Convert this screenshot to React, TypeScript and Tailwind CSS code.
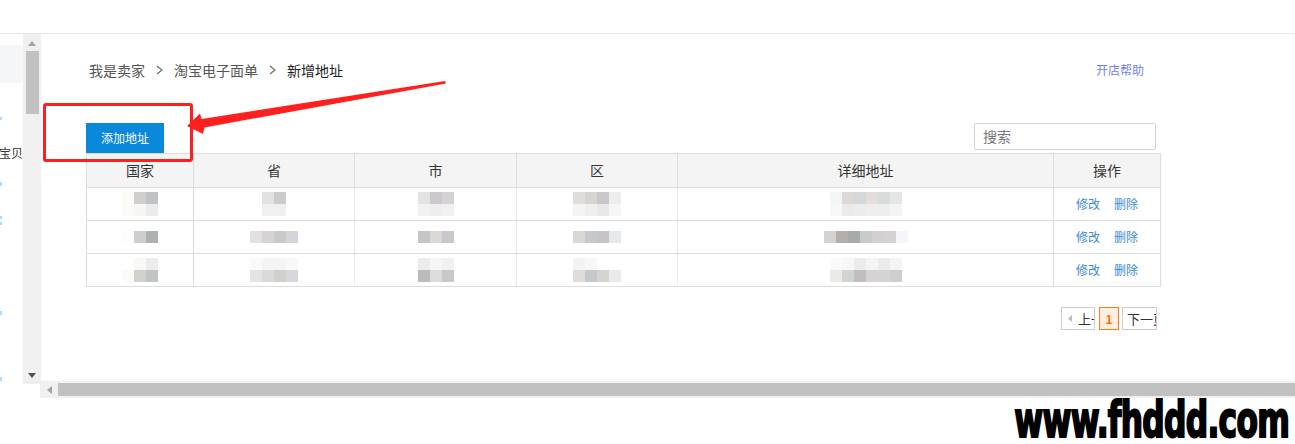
import React from 'react';

type Blur = string[][];

// pixelated (mosaic) placeholders for the hidden address data
const rows: { cells: Blur[] }[] = [
  {
    cells: [
      [["bg-[#fbfaf7]", "bg-[#d0cfcc]", "bg-[#bfc3c5]"], ["bg-[#fbfaf7]", "bg-[#f7f6f4]", "bg-[#ebecee]"]],
      [["bg-[#e2e2e2]", "bg-[#cccccc]"], ["bg-[#f0f0f0]", "bg-[#f0f0f0]"]],
      [["bg-[#e3e3e3]", "bg-[#cbc9cb]", "bg-[#d5d2d6]"], ["bg-[#f1f1f1]", "bg-[#eeeeee]", "bg-[#f2f0f3]"]],
      [["bg-[#dedddc]", "bg-[#d6d4d0]", "bg-[#cbc6c9]", "bg-[#eceeee]"], ["bg-[#f4f4f4]", "bg-[#f0efef]", "bg-[#e9e8e8]", "bg-[#f6f6f6]"]],
      [["bg-[#f4f5f5]", "bg-[#ddd9d7]", "bg-[#d5d8d9]", "bg-[#e2dedc]", "bg-[#d8dcdc]", "bg-[#e6e5e5]"], ["bg-[#f8f8f8]", "bg-[#ebe9e9]", "bg-[#ececec]", "bg-[#eeeeee]", "bg-[#eeeeee]", "bg-[#f4f4f4]"]],
    ],
  },
  {
    cells: [
      [["bg-[#fdfcfa]", "bg-[#cecdcb]", "bg-[#aeb1b2]"]],
      [["bg-[#e1e1e1]", "bg-[#d6d2d6]", "bg-[#c9cac5]", "bg-[#d5d4da]"]],
      [["bg-[#c7c5c4]", "bg-[#dad9d6]", "bg-[#cbc6cb]"]],
      [["bg-[#dad8d4]", "bg-[#c5c9cb]", "bg-[#c8c3c7]", "bg-[#e6e9eb]"]],
      [["bg-[#d5d3d1]", "bg-[#b2afac]", "bg-[#a6aaa9]", "bg-[#c8cbcc]", "bg-[#d4cfd3]", "bg-[#d5d3d1]", "bg-[#f3f5f8]"]],
    ],
  },
  {
    cells: [
      [["bg-[#ffffff]", "bg-[#f9f8f6]", "bg-[#ebecee]"], ["bg-[#fbfaf7]", "bg-[#d2d1ce]", "bg-[#c0c4c4]"]],
      [["bg-[#fafafa]", "bg-[#f4f4f4]", "bg-[#f4f4f4]", "bg-[#f8f8f8]"], ["bg-[#e4e4e4]", "bg-[#dcd9dc]", "bg-[#d0d0cc]", "bg-[#d9d7dc]"]],
      [["bg-[#ececec]", "bg-[#f6f6f6]", "bg-[#f1f1f1]"], ["bg-[#bdbcbc]", "bg-[#dddcdc]", "bg-[#ccc7cc]"]],
      [["bg-[#f4f3f2]", "bg-[#f7f7f7]", "bg-[#ffffff]", "bg-[#ffffff]"], ["bg-[#dfddd9]", "bg-[#c4c8ca]", "bg-[#d6d4d0]", "bg-[#eaeaea]"]],
      [["bg-[#fafafa]", "bg-[#f7f7f7]", "bg-[#ececec]", "bg-[#f4f4f6]", "bg-[#ebebeb]", "bg-[#f4f4f4]"], ["bg-[#ebeae6]", "bg-[#d2d4d3]", "bg-[#c2bebf]", "bg-[#d5d3d5]", "bg-[#d5d3d3]", "bg-[#cfcdcd]"]],
    ],
  },
];

const colW = ["w-[107px]", "w-[161px]", "w-[162px]", "w-[161px]", "w-[376px]", "w-[107px]"];
const heads = ["国家", "省", "市", "区", "详细地址", "操作"];

const Mosaic = ({ grid }: { grid: Blur }) => (
  <div className="flex flex-col">
    {grid.map((line, i) => (
      <div key={i} className="flex">
        {line.map((c, j) => (
          <div key={j} className={`w-[12px] h-[12px] ${c}`} />
        ))}
      </div>
    ))}
  </div>
);

const Chevron = () => (
  <svg width="7" height="10" viewBox="0 0 7 10" className="mx-[11px]">
    <polyline points="1,1 6,5 1,9" fill="none" stroke="#666" strokeWidth="1.1" />
  </svg>
);

const Sidebar = () => (
  <div className="w-[23px] flex flex-col overflow-hidden">
    <div className="mt-[11px] h-[38px] bg-[#f5f6f8]" />
    <div className="mt-[34px] w-[2px] h-[3px] bg-[#a8dcff]" />
    <div className="mt-[26px] flex justify-end whitespace-nowrap text-[12px] leading-[14px] text-[#333]">发布宝贝</div>
    <div className="mt-[22px] w-[2px] h-[4px] bg-[#a8dcff]" />
    <div className="mt-[30px] w-[2px] h-[3px] bg-[#a8dcff]" />
    <div className="mt-[3px] w-[2px] h-[3px] bg-[#a8dcff]" />
    <div className="mt-[86px] w-[2px] h-[4px] bg-[#a8dcff]" />
    <div className="mt-[62px] w-[2px] h-[4px] bg-[#a8dcff]" />
  </div>
);

const VScroll = () => (
  <div className="w-[18px] bg-[#f0f0f0] flex flex-col items-center">
    <svg width="8" height="5" viewBox="0 0 8 5" className="mt-[7px]">
      <polygon points="0,5 4,0 8,5" fill="#a3a3a3" />
    </svg>
    <div className="mt-[5px] w-[13px] h-[63px] bg-[#c1c1c1]" />
    <div className="flex-1" />
    <svg width="8" height="5" viewBox="0 0 8 5" className="mb-[3px]">
      <polygon points="0,0 8,0 4,5" fill="#505050" />
    </svg>
  </div>
);

export default function App() {
  return (
    <div className="relative w-[1295px] h-[444px] bg-white overflow-hidden font-['Microsoft_YaHei','Noto_Sans_CJK_SC',sans-serif]">
      <div className="h-[34px] border-b border-[#e8e8e8]" />

      <div className="flex h-[347px]">
        <Sidebar />
        <VScroll />
        <main className="flex-1 pl-[45px]">
          <div className="w-[1075px]">
            {/* breadcrumb */}
            <div className="mt-[26px] h-[20px] pl-[3px] pr-[17px] flex items-center justify-between">
              <div className="flex items-center text-[14px] text-[#555]">
                <span>我是卖家</span>
                <Chevron />
                <span>淘宝电子面单</span>
                <Chevron />
                <span className="text-[#222]">新增地址</span>
              </div>
              <a className="text-[12px] text-[#6f7ff5]">开店帮助</a>
            </div>

            {/* toolbar */}
            <div className="mt-[43px] flex items-start justify-between">
              <button className="w-[78px] h-[30px] bg-[#0a88d9] text-white text-[12px]">添加地址</button>
              <div className="mr-[5px] w-[182px] h-[27px] border border-[#d4d4d4] rounded-[2px] flex items-center px-[8px] text-[14px] text-[#777]">
                搜索
              </div>
            </div>

            {/* table */}
            <div className="border-l border-t border-[#dddddd]">
              <div className="flex h-[34px] bg-[#f4f4f4] border-b border-[#dddddd]">
                {heads.map((h, i) => (
                  <div key={h} className={`${colW[i]} border-r border-[#dddddd] flex items-center justify-center text-[14px] text-[#333]`}>
                    {h}
                  </div>
                ))}
              </div>
              {rows.map((r, ri) => (
                <div key={ri} className="flex h-[33px] border-b border-[#dddddd]">
                  {r.cells.map((g, ci) => (
                    <div
                      key={ci}
                      className={`${colW[ci]} border-r ${ci === 0 || ci === 4 ? 'border-[#dddddd]' : 'border-[#ebebeb]'} flex items-center justify-center`}
                    >
                      <Mosaic grid={g} />
                    </div>
                  ))}
                  <div className={`${colW[5]} border-r border-[#dddddd] flex items-center justify-center gap-[14px] text-[12px] text-[#3a8ad6]`}>
                    <span>修改</span>
                    <span>删除</span>
                  </div>
                </div>
              ))}
            </div>

            {/* pager */}
            <div className="mt-[20px] pr-[4px] flex justify-end items-center text-[13px] text-[#333]">
              <div className="w-[34px] h-[23px] border border-[#cccccc] flex items-center overflow-hidden whitespace-nowrap">
                <svg width="4" height="7" viewBox="0 0 4 7" className="ml-[6px] mr-[6px] shrink-0">
                  <polygon points="4,0 0,3.5 4,7" fill="#bbbbbb" />
                </svg>
                <span>上一页</span>
              </div>
              <div className="ml-[4px] w-[20px] h-[23px] border border-[#ff7a1a] bg-[#ffeee2] flex items-center justify-center text-[12px] font-bold text-[#ff7300]">
                1
              </div>
              <div className="ml-[3px] w-[35px] h-[23px] border border-[#cccccc] flex items-center overflow-hidden whitespace-nowrap pl-[4px]">
                <span>下一页</span>
              </div>
            </div>
          </div>
        </main>
      </div>

      {/* horizontal scrollbar */}
      <div className="flex h-[17px]">
        <div className="w-[23px]" />
        <div className="w-[17px]">
          <div className="h-[3px] bg-[#f0f0f0]" />
        </div>
        <div className="flex-1 bg-[#f0f0f0] flex items-center">
          <svg width="5" height="8" viewBox="0 0 5 8" className="ml-[7px] mr-[6px]">
            <polygon points="5,0 0,4 5,8" fill="#a3a3a3" />
          </svg>
          <div className="flex-1 h-[13px] bg-[#c1c1c1]" />
        </div>
      </div>

      {/* watermark */}
      <div className="flex justify-end pr-[6px]">
        <span className="origin-right scale-x-[0.71] text-[49px] leading-[45px] font-bold tracking-[-1px] text-black font-['Liberation_Sans_Narrow','DejaVu_Sans_Condensed',sans-serif] [-webkit-text-stroke:2px_#000]">
          www.fhddd.com
        </span>
      </div>

      {/* annotation: red box and arrow */}
      <div className="absolute left-[43px] top-[103px] w-[150px] h-[59px] border-[3px] border-[#ff1f1f] rounded-[3px] pointer-events-none" />
      <svg className="absolute left-0 top-0 pointer-events-none" width="1295" height="444">
        <polygon
          points="187,126 200,113.5 201.5,119 445,81 446,83.5 204.5,127.5 203,134"
          fill="#ff1f1f"
        />
      </svg>
    </div>
  );
}
